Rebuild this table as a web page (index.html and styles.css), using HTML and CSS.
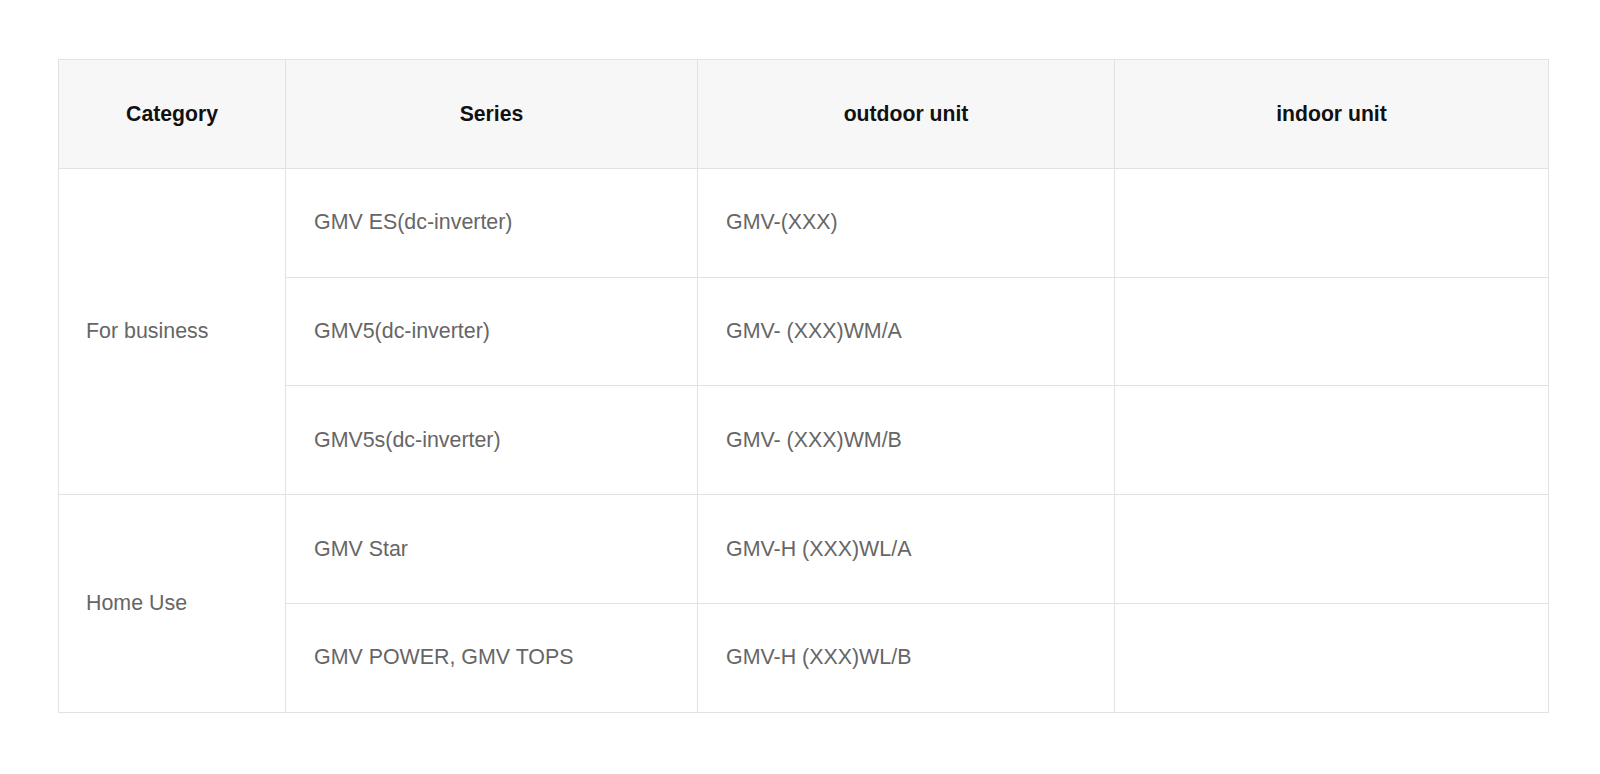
FILE: index.html
```html
<!DOCTYPE html>
<html lang="en">
<head>
<meta charset="utf-8">
<title>GMV series</title>
<link rel="stylesheet" href="styles.css">
</head>
<body>
<div class="page">
  <table class="spec">
    <colgroup>
      <col class="c1">
      <col class="c2">
      <col class="c3">
      <col class="c4">
    </colgroup>
    <thead>
      <tr>
        <th>Category</th>
        <th>Series</th>
        <th>outdoor unit</th>
        <th>indoor unit</th>
      </tr>
    </thead>
    <tbody>
      <tr>
        <td class="cat" rowspan="3">For business</td>
        <td>GMV ES(dc-inverter)</td>
        <td>GMV-(XXX)</td>
        <td></td>
      </tr>
      <tr>
        <td>GMV5(dc-inverter)</td>
        <td>GMV- (XXX)WM/A</td>
        <td></td>
      </tr>
      <tr>
        <td>GMV5s(dc-inverter)</td>
        <td>GMV- (XXX)WM/B</td>
        <td></td>
      </tr>
      <tr>
        <td class="cat" rowspan="2">Home Use</td>
        <td>GMV Star</td>
        <td>GMV-H (XXX)WL/A</td>
        <td></td>
      </tr>
      <tr>
        <td>GMV POWER, GMV TOPS</td>
        <td>GMV-H (XXX)WL/B</td>
        <td></td>
      </tr>
    </tbody>
  </table>
</div>
</body>
</html>
```

FILE: styles.css
```css
html, body {
  margin: 0;
  padding: 0;
  background: #ffffff;
}

.page {
  padding: 59px 0 0 58px;
  font-family: "Liberation Sans", Arial, sans-serif;
}

.spec {
  border-collapse: collapse;
  table-layout: fixed;
  width: 1490px;
}

.c1 { width: 227px; }
.c2 { width: 412px; }
.c3 { width: 417px; }
.c4 { width: 434px; }

.spec th,
.spec td {
  border: 1px solid #e2e2e2;
  height: 108.8px;
  padding: 0 28px;
  vertical-align: middle;
  box-sizing: border-box;
}

.spec th {
  background: #f7f7f7;
  color: #111111;
  font-size: 21.2px;
  font-weight: bold;
  text-align: center;
}

.spec td {
  color: #666666;
  font-size: 21.4px;
  text-align: left;
  font-weight: normal;
}

.spec td.cat {
  padding-left: 27px;
}
```
